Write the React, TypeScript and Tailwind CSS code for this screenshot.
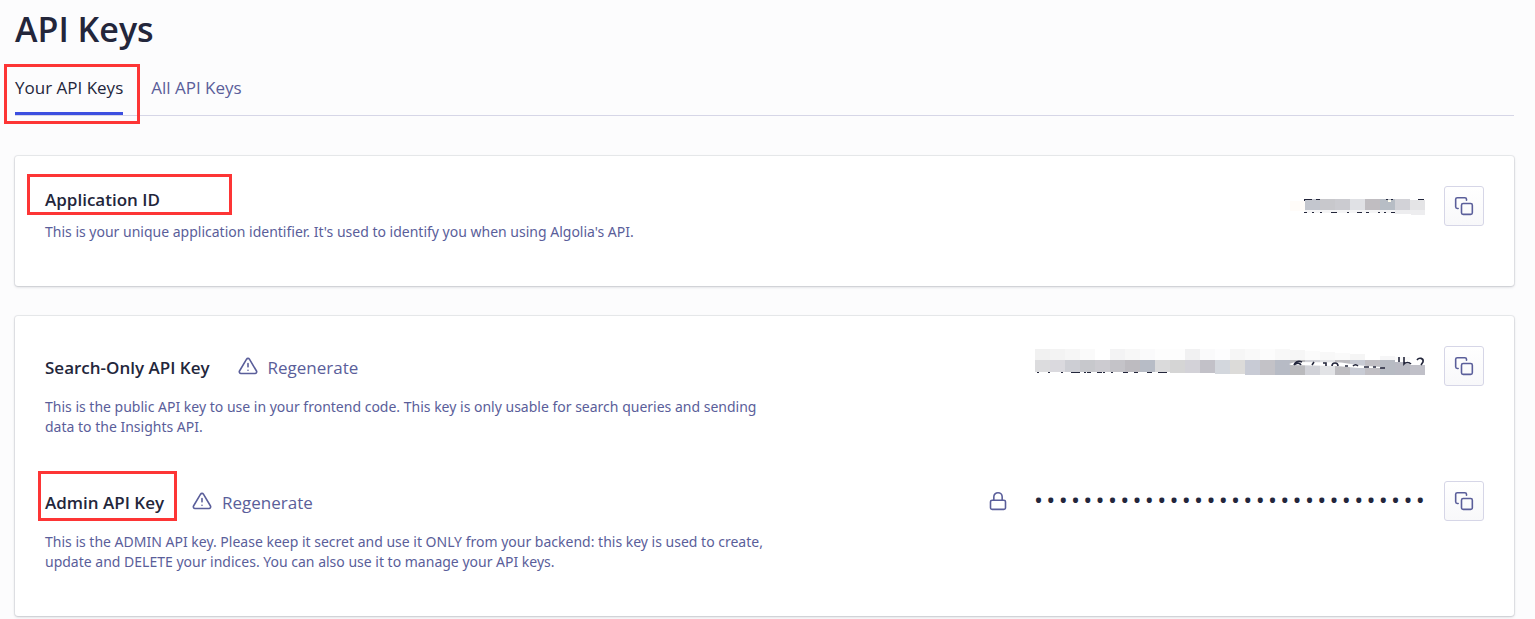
import type { ReactNode } from 'react';

const FEATHER = {
  width: 20,
  height: 20,
  viewBox: '0 0 24 24',
  fill: 'none',
  stroke: 'currentColor',
  strokeWidth: 1.9,
  strokeLinecap: 'round' as const,
  strokeLinejoin: 'round' as const,
  'aria-hidden': true,
};

function CopyIcon() {
  return (
    <svg {...FEATHER}>
      <rect x="9" y="9" width="13" height="13" rx="2" />
      <path d="M5 15H4a2 2 0 0 1-2-2V4a2 2 0 0 1 2-2h9a2 2 0 0 1 2 2v1" />
    </svg>
  );
}

function WarningIcon() {
  return (
    <svg {...FEATHER}>
      <path d="M10.29 3.86L1.82 18a2 2 0 0 0 1.71 3h16.94a2 2 0 0 0 1.71-3L13.71 3.86a2 2 0 0 0-3.42 0z" />
      <path d="M12 9v4M12 17h.01" />
    </svg>
  );
}

function LockIcon() {
  return (
    <svg {...FEATHER}>
      <rect x="3" y="11" width="18" height="11" rx="2" />
      <path d="M7 11V7a5 5 0 0 1 10 0v4" />
    </svg>
  );
}

function Highlight({ className }: { className: string }) {
  return <span aria-hidden="true" className={`pointer-events-none absolute border-3 border-[#fd3535] ${className}`} />;
}

function CopyButton({ label }: { label: string }) {
  return (
    <button
      type="button"
      aria-label={label}
      className="flex size-10 shrink-0 items-center justify-center rounded-[3px] border border-[#d6d6e7] bg-linear-to-b from-white to-[#f8f8fa] text-[#5a5e9a]"
    >
      <CopyIcon />
    </button>
  );
}

function Regenerate() {
  return (
    <button type="button" className="flex h-7 items-start gap-2.5 text-[17px] leading-7 text-[#5a5e9a]">
      <span className="pt-0.5">
        <WarningIcon />
      </span>
      Regenerate
    </button>
  );
}

const ID_BLOCKS = ['#c3c6ce', '#c8c8cc', '#cbcbd0', '#e0e1e5', '#c0bdc1', '#b7bdc5', '#d2d2d7', '#e4e4e6'];

function MaskedId() {
  return (
    <svg width="135" height="40" viewBox="0 0 135 40" role="img" aria-label="Hidden application ID">
      <rect x="0" y="15" width="15" height="10" fill="#fffcf9" />
      <rect x="15" y="24" width="120" height="3" fill="#f5f5f6" />
      <rect x="105" y="24" width="30" height="4" fill="#ededef" />
      <rect x="121" y="28" width="14" height="1" fill="#ededef" />
      {ID_BLOCKS.map((c, i) => (
        <rect key={i} x={15 + i * 15} y={i === 7 ? 14 : 13} width="15" height={i === 7 ? 10 : 11} fill={c} />
      ))}
      <path d="M14 13.500h8M26 13.500h4M96 13.500h2M101 13.500h2M128 13.500h6" stroke="#23263b" />
      <path d="M14.500 13v2" stroke="#23263b" />
      <path d="M14 26.500h3M22 26.500h2M30 26.500h2M41 26.500h6M57 26.500h2M67 26.500h5M76 26.500h3M88 26.500h2M94 26.500h2M101 26.500h4" stroke="#23263b" />
      <rect x="98" y="14" width="3" height="2" fill="#fffdf0" />
    </svg>
  );
}

const KEY_TOP = [
  '#f1f1f1', '#f3f3f3', '#f6f6f6', '#fafafa', '#ffffff', '#f3f3f4', '#f7f7f7', '#fafafb', '#fdfdfd', '#fdfdfd',
  '#f1f1f2', '#fafafb', '#fdfdfe', '#f6f6f6', '#f9f9f9', '#fcfcfc', '#f8f8f8', '#f6f6f6', '#fbfbfb', '#f8f8f8',
  '#fafafa', '#f5f5f5', '#ffffff', '#f6f6f7', '#fafafa', '#ffffff',
];
const KEY_MAIN = [
  '#dcdcde', '#dad9de', '#cdced4', '#c7c8cc', '#cccbd0', '#c4c3c8', '#bdbbc0', '#b7bcc6', '#dadadb', '#d5d5d5',
  '#d3d2d8', '#c2c1c8', '#d3d7dd', '#dcdbd9', '#c8cbd5', '#c3c2c7', '#b7bbc5', '#bababd', '#d1d2d8', '#e2e3e6',
  '#bdbcc0', '#c8cbd4', '#c1bfc4', '#b7bbc3', '#b9bac3', '#c0c0c8',
];

function MaskedKey() {
  return (
    <svg width="390" height="40" viewBox="0 0 390 40" role="img" aria-label="Hidden search key">
      {KEY_TOP.map((c, i) => {
        const y = i < 17 ? 3 : 3 + (i - 16);
        return <rect key={i} x={i * 15} y={y} width="15" height={14 - y} fill={c} />;
      })}
      {KEY_MAIN.map((c, i) => (
        <rect
          key={i}
          x={i * 15}
          y={i === 25 ? 19 : i === 24 ? 16 : 14}
          width="15"
          height={i === 25 ? 10 : i === 24 ? 13 : i < 9 ? 12 : i < 12 ? 13 : i < 14 ? 14 : 15}
          fill={c}
        />
      ))}
      <path
        d="M2 26.500h2M13 26.500h2M26 26.500h2M36 26.500h9M49 26.500h2M52 26.500h4M62 26.500h5M68 26.500h2M76 26.500h2M88 26.500h5M99 26.500h4M112 26.500h5M123 26.500h9"
        stroke="#23263b"
      />
      <path d="M254 18l6-2 46 .5 20 3 20 1.500v1h-22l-22-2-46-1z" fill="#fff" />
      <g fill="none" stroke="#23263b" strokeWidth="1.600">
        <path d="M267 16c-4-2-7 0-8 3M259 19c3-3 6-2 7 0M277 19l2-3M288 17h3v3M297 20c0-4 6-4 6 0M310 20h3M318 20c2-2 4-1 5 0M329 21h5M338 21h3M345 22h5" />
        <path d="M364 11v5M369 11v7c2-2 5-2 7 0M382 14c2-3 7-2 6 2l-2 3" />
      </g>
    </svg>
  );
}

function MaskedDots() {
  return (
    <div aria-label="Hidden admin key" className="flex h-10 w-[391px] justify-between text-[24px] leading-[38px] text-[#23263b]">
      {Array.from({ length: 32 }, (_, i) => (
        <span key={i}>•</span>
      ))}
    </div>
  );
}

function Card({ children }: { children: ReactNode }) {
  return (
    <section className="flex flex-col gap-11 rounded-[3px] bg-white px-[30px] pt-[30px] pb-11 shadow-[0_0_0_1px_rgba(35,38,59,0.07),0_1px_3px_rgba(35,38,59,0.2)]">
      {children}
    </section>
  );
}

function Row({ children, secret, label }: { children: ReactNode; secret: ReactNode; label: string }) {
  return (
    <div className="flex items-start justify-between gap-6">
      <div className="max-w-[735px]">{children}</div>
      <div className="flex shrink-0 items-center gap-[19px]">
        {secret}
        <CopyButton label={label} />
      </div>
    </div>
  );
}

const HEADING = 'text-[17px] leading-7 font-semibold text-[#23263b]';
const BODY = "font-['Noto_Sans',sans-serif] text-[14px] leading-5 text-[#5a5e9a]";

export default function App() {
  return (
    <main className="min-h-screen bg-[#fcfcfd] pr-[21px] pb-[3px] pl-[15px] font-['Open_Sans',sans-serif]">
      <h1 className="pt-[7px] text-[34px] leading-11 font-semibold text-[#23263b]">API Keys</h1>

      <nav aria-label="API keys" className="mt-[13px] flex h-13 gap-7 border-b border-[#d6d6e7] text-[17px] leading-12">
        <a href="#yours" aria-current="page" className="relative h-[51px] border-b-3 border-[#3c4fe0] text-[#23263b]">
          Your API Keys
          <Highlight className="top-0 -right-[17px] -bottom-3 -left-[11px]" />
        </a>
        <a href="#all" className="text-[#5a5e9a]">
          All API Keys
        </a>
      </nav>

      <div className="mt-10 flex flex-col gap-[30px]">
        <Card>
          <Row secret={<MaskedId />} label="Copy application ID">
            <h2 className={`relative w-fit ${HEADING}`}>
              Application ID
              <Highlight className="-top-3 -left-[18px] h-[41px] w-[205px]" />
            </h2>
            <p className={`mt-2 ${BODY}`}>
              This is your unique application identifier. It's used to identify you when using Algolia's API.
            </p>
          </Row>
        </Card>

        <Card>
          <Row secret={<MaskedKey />} label="Copy search-only API key">
            <div className="mt-2 flex gap-7">
              <h2 className={HEADING}>Search-Only API Key</h2>
              <Regenerate />
            </div>
            <p className={`mt-[15px] ${BODY}`}>
              This is the public API key to use in your frontend code. This key is only usable for search queries and
              sending data to the Insights API.
            </p>
          </Row>
          <Row
            secret={
              <div className="flex items-center gap-[26px]">
                <span className="text-[#5a5e9a]">
                  <LockIcon />
                </span>
                <MaskedDots />
              </div>
            }
            label="Copy admin API key"
          >
            <div className="mt-2 flex gap-7">
              <h2 className={`relative ${HEADING}`}>
                Admin API Key
                <Highlight className="-top-[18px] -left-[7px] h-[50px] w-[139px]" />
              </h2>
              <Regenerate />
            </div>
            <p className={`mt-[15px] ${BODY}`}>
              This is the ADMIN API key. Please keep it secret and use it ONLY from your backend: this key is used to
              create, update and DELETE your indices. You can also use it to manage your API keys.
            </p>
          </Row>
        </Card>
      </div>
    </main>
  );
}
